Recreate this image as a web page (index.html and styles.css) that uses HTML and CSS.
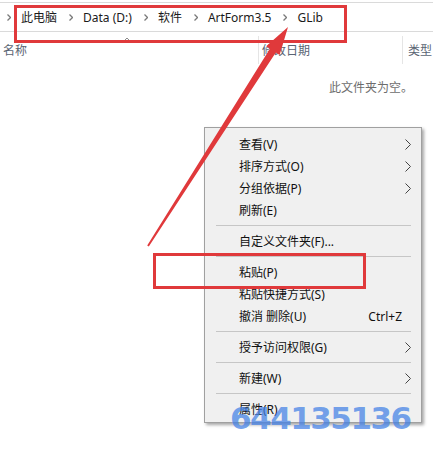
FILE: index.html
```html
<!DOCTYPE html>
<html lang="zh-CN">
<head>
    <meta charset="UTF-8">
    <title>GLib</title>
    <link rel="stylesheet" href="styles.css">
</head>
<body>
    <div class="page">
        <div class="addr">
            <span class="sep"><svg width="4" height="7" viewBox="0 0 4 7"><polyline points="0.5,0.5 3.5,3.5 0.5,6.5"/></svg></span>
            <span class="crumb">此电脑</span>
            <span class="sep"><svg width="4" height="7" viewBox="0 0 4 7"><polyline points="0.5,0.5 3.5,3.5 0.5,6.5"/></svg></span>
            <span class="crumb">Data (D:)</span>
            <span class="sep"><svg width="4" height="7" viewBox="0 0 4 7"><polyline points="0.5,0.5 3.5,3.5 0.5,6.5"/></svg></span>
            <span class="crumb">软件</span>
            <span class="sep"><svg width="4" height="7" viewBox="0 0 4 7"><polyline points="0.5,0.5 3.5,3.5 0.5,6.5"/></svg></span>
            <span class="crumb">ArtForm3.5</span>
            <span class="sep"><svg width="4" height="7" viewBox="0 0 4 7"><polyline points="0.5,0.5 3.5,3.5 0.5,6.5"/></svg></span>
            <span class="crumb">GLib</span>
        </div>

        <div class="cols">
            <div class="col col-name">
                名称
                <svg class="sort" width="8" height="5" viewBox="0 0 8 5"><polyline points="0.5,4.5 4,1 7.5,4.5"/></svg>
            </div>
            <div class="col col-date">修改日期</div>
            <div class="col col-type">类型</div>
        </div>

        <p class="empty">此文件夹为空。</p>

        <!-- right click menu -->
        <div class="menu">
            <div class="item"><span class="label">查看(V)</span><svg class="more" width="6" height="11" viewBox="0 0 6 11"><polyline points="0.5,0.5 5.5,5.5 0.5,10.5"/></svg></div>
            <div class="item"><span class="label">排序方式(O)</span><svg class="more" width="6" height="11" viewBox="0 0 6 11"><polyline points="0.5,0.5 5.5,5.5 0.5,10.5"/></svg></div>
            <div class="item"><span class="label">分组依据(P)</span><svg class="more" width="6" height="11" viewBox="0 0 6 11"><polyline points="0.5,0.5 5.5,5.5 0.5,10.5"/></svg></div>
            <div class="item"><span class="label">刷新(E)</span></div>
            <div class="line"></div>
            <div class="item"><span class="label">自定义文件夹(F)...</span></div>
            <div class="line"></div>
            <div class="item"><span class="label">粘贴(P)</span></div>
            <div class="item"><span class="label">粘贴快捷方式(S)</span></div>
            <div class="item"><span class="label">撤消 删除(U)</span><span class="key">Ctrl+Z</span></div>
            <div class="line"></div>
            <div class="item"><span class="label">授予访问权限(G)</span><svg class="more" width="6" height="11" viewBox="0 0 6 11"><polyline points="0.5,0.5 5.5,5.5 0.5,10.5"/></svg></div>
            <div class="line"></div>
            <div class="item"><span class="label">新建(W)</span><svg class="more" width="6" height="11" viewBox="0 0 6 11"><polyline points="0.5,0.5 5.5,5.5 0.5,10.5"/></svg></div>
            <div class="line"></div>
            <div class="item"><span class="label">属性(R)</span></div>
        </div>

        <!-- red annotations -->
        <svg class="marks" width="433" height="450" viewBox="0 0 433 450">
            <rect x="15.5" y="6.5" width="330" height="35"/>
            <rect x="154.5" y="254.5" width="210" height="33"/>
            <polygon class="arrow" points="147.2,245.5 269.9,48.7 266.2,46.3 288,27 279.6,54.9 275.8,52.5 148.8,246.5"/>
        </svg>

        <div class="watermark">644135136</div>
    </div>
</body>
</html>
```

FILE: styles.css
```css
html, body {
    margin: 0;
    padding: 0;
    background: #fff;
    font-family: 'Noto Sans', 'Noto Sans CJK SC', sans-serif;
    font-size: 12px;
    color: #1b1b1b;
}

.page {
    position: relative;
    width: 433px;
    height: 450px;
    overflow: hidden;
}

.addr {
    margin-top: 2px;
    height: 28px;
    border-top: 1px solid #dadada;
    border-bottom: 1px solid #dadada;
    display: flex;
    align-items: center;
    padding-left: 7px;
}

.sep {
    display: flex;
    align-items: center;
    width: 14px;
}

.sep polyline {
    fill: none;
    stroke: #7a7a7a;
    stroke-width: 1.3;
}

.crumb {
    margin-right: 12px;
    white-space: nowrap;
}

.cols {
    margin-top: 4px;
    height: 28px;
    display: grid;
    grid-template-columns: 258px 144px 1fr;
    color: #5a6473;
}

.col {
    display: flex;
    align-items: center;
    white-space: nowrap;
}

.col-name {
    position: relative;
    padding-left: 3px;
}

.col-date {
    border-left: 1px solid #e5e5e5;
    padding-left: 3px;
}

.col-type {
    border-left: 1px solid #e5e5e5;
    padding-left: 5px;
}

.sort {
    position: absolute;
    left: 123px;
    top: 1px;
}

.sort polyline {
    fill: none;
    stroke: #8a8a8a;
    stroke-width: 1;
}

.empty {
    margin: 16px 0 0;
    padding-left: 329px;
    line-height: 16px;
    color: #6d6d6d;
    white-space: nowrap;
}

.menu {
    position: absolute;
    left: 204px;
    top: 127px;
    width: 216px;
    padding: 5px 0 2px;
    background: #f0f0f0;
    border: 1px solid #a0a0a0;
    box-shadow: 2px 2px 3px rgba(0, 0, 0, 0.35);
    color: #111;
}

.item {
    display: flex;
    align-items: center;
    height: 22px;
    padding: 0 10px 0 34px;
    white-space: nowrap;
}

.item .label {
    flex: 1;
}

.item .key {
    margin-right: 9px;
}

.more polyline {
    fill: none;
    stroke: #444;
    stroke-width: 1;
}

.line {
    height: 1px;
    background: #c6c6c6;
    margin: 4px 10px 4px 11px;
}

.marks {
    position: absolute;
    left: 0;
    top: 0;
    pointer-events: none;
}

.marks rect {
    fill: none;
    stroke: #e0393b;
    stroke-width: 3;
}

.marks .arrow {
    fill: #e0393b;
    stroke: none;
}

.watermark {
    position: absolute;
    left: 230px;
    top: 403px;
    font-family: 'DejaVu Sans', sans-serif;
    font-weight: bold;
    font-size: 31px;
    line-height: 1;
    letter-spacing: -1.5px;
    color: rgba(66, 128, 230, 0.72);
    white-space: nowrap;
}
```
